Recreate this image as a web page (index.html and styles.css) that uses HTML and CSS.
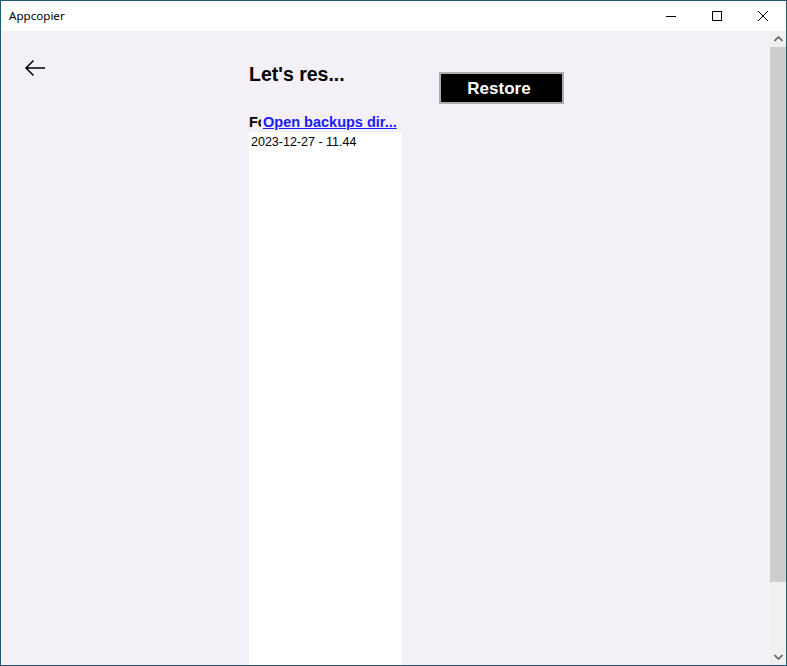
FILE: index.html
```html
<!DOCTYPE html>
<html lang="en">
<head>
<meta charset="utf-8">
<title>Appcopier</title>
<link rel="stylesheet" href="styles.css">
</head>
<body>
<div class="window">
  <header class="titlebar">
    <span class="title">Appcopier</span>
    <div class="controls">
      <span class="ctl"><svg width="10" height="10" viewBox="0 0 10 10"><path d="M0 5.5H10" stroke="#000" stroke-width="1"/></svg></span>
      <span class="ctl"><svg width="10" height="10" viewBox="0 0 10 10"><rect x="0.5" y="0.5" width="9" height="9" fill="none" stroke="#000" stroke-width="1"/></svg></span>
      <span class="ctl"><svg width="10" height="10" viewBox="0 0 10 10"><path d="M0 0L10 10M10 0L0 10" stroke="#000" stroke-width="1"/></svg></span>
    </div>
  </header>
  <div class="body">
    <main class="content">
      <div class="back-col">
        <button class="back" aria-label="Back">
          <svg width="22" height="18" viewBox="0 0 22 18"><path d="M21 9H2M9.5 1.5L2 9l7.5 7.5" fill="none" stroke="#000" stroke-width="1.5"/></svg>
        </button>
      </div>
      <section class="panel">
        <div class="head-row">
          <h1 class="heading">Let's res...</h1>
          <button class="restore">Restore</button>
        </div>
        <div class="label-row">
          <span class="label">Folder:</span>
          <a class="link" href="#">Open backups dir...</a>
        </div>
        <ul class="list">
          <li class="item">2023-12-27 - 11.44</li>
        </ul>
      </section>
    </main>
    <div class="scrollbar">
      <div class="sb-btn"><svg width="9" height="6" viewBox="0 0 9 6"><path d="M0.5 5L4.5 1L8.5 5" fill="none" stroke="#606060" stroke-width="1.6"/></svg></div>
      <div class="sb-thumb"></div>
      <div class="sb-track"></div>
      <div class="sb-btn"><svg width="9" height="6" viewBox="0 0 9 6"><path d="M0.5 1L4.5 5L8.5 1" fill="none" stroke="#606060" stroke-width="1.6"/></svg></div>
    </div>
  </div>
</div>
</body>
</html>
```
FILE: styles.css
```css
* { box-sizing: border-box; }
html, body { margin: 0; padding: 0; }
body { width: 787px; height: 666px; overflow: hidden; background: #fff; }

.window {
  width: 787px;
  height: 666px;
  border: 1px solid #1d5878;
  display: flex;
  flex-direction: column;
  background: #f3f0f7;
}

.titlebar {
  height: 30px;
  flex: none;
  background: #fff;
  display: flex;
  align-items: center;
  justify-content: space-between;
}
.title {
  font-family: "Noto Sans", "Open Sans", sans-serif;
  font-size: 11.6px;
  color: #000;
  padding-left: 8px;
  margin-top: -1px;
}
.controls { display: flex; height: 100%; }
.ctl {
  width: 46px;
  height: 100%;
  display: flex;
  align-items: center;
  justify-content: center;
}

.body {
  flex: 1;
  display: flex;
  min-height: 0;
}
.content {
  flex: 1;
  display: flex;
  min-width: 0;
}
.back-col { width: 248px; flex: none; }
.back {
  margin: 27px 0 0 22px;
  padding: 0;
  border: 0;
  background: none;
  width: 24px;
  height: 20px;
  display: flex;
  align-items: center;
  justify-content: center;
}

.panel {
  display: flex;
  flex-direction: column;
  font-family: "Liberation Sans", Arial, sans-serif;
}
.head-row {
  display: flex;
  align-items: flex-start;
  padding-top: 32px;
}
.heading {
  margin: 0;
  width: 190px;
  font-size: 19.5px;
  line-height: 22px;
  font-weight: bold;
  color: #000;
}
.restore {
  margin-top: 9px;
  width: 125px;
  height: 32px;
  border: 2px solid #adadad;
  background: #000;
  color: #fff;
  font-family: "Liberation Sans", Arial, sans-serif;
  font-size: 17px;
  font-weight: bold;
  padding: 1px 5px 0 0;
}

.label-row {
  display: flex;
  margin-top: 10px;
  height: 16px;
  font-size: 14.5px;
  line-height: 16px;
  font-weight: bold;
}
.label {
  width: 12px;
  overflow: hidden;
  white-space: nowrap;
  color: #000;
}
.link {
  margin-left: 2px;
  color: #1a1aff;
  text-decoration: underline;
  white-space: nowrap;
}

.list {
  list-style: none;
  margin: 2px 0 0 0;
  padding: 3px 0 0 2px;
  width: 153px;
  flex: 1;
  background: #fff;
}
.item {
  font-size: 12.5px;
  line-height: 15px;
  color: #000;
}

.scrollbar {
  width: 16px;
  flex: none;
  display: flex;
  flex-direction: column;
  background: #f0f0f0;
}
.sb-btn {
  height: 16px;
  flex: none;
  display: flex;
  align-items: center;
  justify-content: center;
}
.sb-thumb {
  height: 535px;
  flex: none;
  background: #cdcdcd;
}
.sb-track { flex: 1; }
```
